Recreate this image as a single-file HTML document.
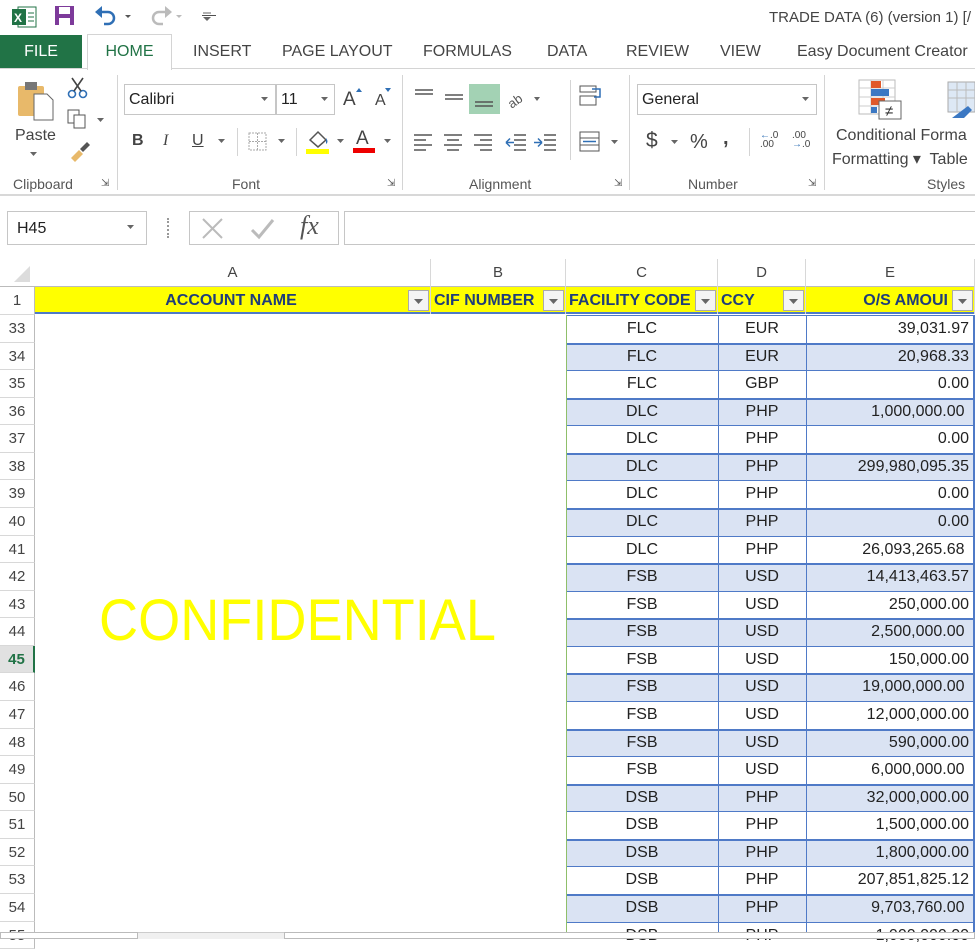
<!DOCTYPE html>
<html><head><meta charset="utf-8"><style>
*{margin:0;padding:0;box-sizing:border-box}
body{width:975px;height:939px;overflow:hidden;background:#fff;font-family:"Liberation Sans",sans-serif;position:relative;color:#444}
.a{position:absolute}
.t{font-size:15px;color:#444;white-space:nowrap}
.grp{font-size:14px;color:#555}
.sep{position:absolute;width:1px;background:#d4d4d4}
.rh{position:absolute;left:0;width:35px;font-size:15px;color:#444;text-align:center;border-bottom:1px solid #d8d8d8;border-right:1px solid #bbb;background:#fff}
.cell{position:absolute;font-size:16px;color:#222;white-space:nowrap}
</style></head><body>
<!-- title bar -->
<svg class="a" style="left:12px;top:6px" width="26" height="22"><rect x="6" y="1" width="18" height="20" fill="#fff" stroke="#217346"/><rect x="0" y="3" width="14" height="16" fill="#217346"/><text x="2" y="16" font-size="12" font-weight="bold" fill="#fff" font-family="Liberation Sans">X</text><line x1="16" y1="7" x2="22" y2="7" stroke="#217346"/><line x1="16" y1="11" x2="22" y2="11" stroke="#217346"/><line x1="16" y1="15" x2="22" y2="15" stroke="#217346"/></svg>
<svg class="a" style="left:54px;top:5px" width="22" height="22"><rect x="1" y="1" width="19" height="19" fill="#7d3a9a"/><rect x="5" y="2" width="11" height="7" fill="#fff"/><rect x="5" y="13" width="11" height="7" fill="#fff"/></svg>
<svg class="a" style="left:94px;top:4px" width="40" height="24"><path d="M5 8 H14 A6 6 0 0 1 14 20 H10" fill="none" stroke="#2f6fb5" stroke-width="2.5"/><path d="M1 8 L8 2 L8 14 Z" fill="#2f6fb5"/><path d="M31 11 l3 3 l3 -3z" fill="#555"/></svg>
<svg class="a" style="left:148px;top:4px" width="40" height="24"><path d="M20 8 H11 A6 6 0 0 0 11 20 H15" fill="none" stroke="#bbb" stroke-width="2.5"/><path d="M24 8 L17 2 L17 14 Z" fill="#bbb"/><path d="M28 11 l3 3 l3 -3z" fill="#bbb"/></svg>
<div class="a t" style="left:202px;top:6px;font-size:14px">&#8213;</div>
<svg class="a" style="left:202px;top:10px" width="10" height="14"><line x1="1" y1="3" x2="9" y2="3" stroke="#666"/><path d="M1 7 h8 l-4 4z" fill="#666"/></svg>
<div class="a t" style="left:769px;top:9px;font-size:15px;color:#444">TRADE DATA (6) (version 1) [/</div>
<!-- tabs -->
<div class="a" style="left:0;top:35px;width:82px;height:34px;background:#217346;color:#fff;font-size:16px;text-align:center;line-height:34px">FILE</div>
<div class="a" style="left:87px;top:34px;width:85px;height:36px;background:#fff;border:1px solid #d4d4d4;border-bottom:none;color:#217346;font-size:16px;text-align:center;line-height:34px;z-index:2">HOME</div>
<div class="a" style="left:0;top:68px;width:975px;height:1px;background:#d4d4d4"></div>
<div class="a t" style="left:193px;top:43px;font-size:16px">INSERT</div>
<div class="a t" style="left:282px;top:43px;font-size:16px">PAGE LAYOUT</div>
<div class="a t" style="left:423px;top:43px;font-size:16px">FORMULAS</div>
<div class="a t" style="left:547px;top:43px;font-size:16px">DATA</div>
<div class="a t" style="left:626px;top:43px;font-size:16px">REVIEW</div>
<div class="a t" style="left:720px;top:43px;font-size:16px">VIEW</div>
<div class="a t" style="left:797px;top:43px;font-size:16px">Easy Document Creator</div>
<!-- ribbon body -->
<div class="a" style="left:0;top:194px;width:975px;height:2px;background:#d8d8d8"></div>
<svg class="a" style="left:16px;top:80px" width="42" height="42"><rect x="2" y="6" width="26" height="30" rx="2" fill="#e8b96a"/><rect x="9" y="2" width="12" height="8" fill="#777"/><path d="M18 14 h13 l6 6 v20 h-19z" fill="#fff" stroke="#666"/></svg>
<div class="a t" style="left:15px;top:127px;font-size:16px">Paste</div>
<svg class="a" style="left:30px;top:152px" width="8" height="6"><path d="M0 0 h7 l-3.5 4z" fill="#666"/></svg>
<svg class="a" style="left:67px;top:77px" width="24" height="22"><circle cx="5" cy="17" r="3.5" fill="none" stroke="#2f6fb5" stroke-width="1.6"/><circle cx="16" cy="17" r="3.5" fill="none" stroke="#2f6fb5" stroke-width="1.6"/><path d="M7 14 L16 1 M14 14 L5 1" stroke="#444" stroke-width="1.6"/></svg>
<svg class="a" style="left:67px;top:108px" width="40" height="22"><rect x="1" y="2" width="11" height="13" fill="#fff" stroke="#555"/><rect x="7" y="7" width="11" height="13" fill="#fff" stroke="#555"/><path d="M30 10 h7 l-3.5 4z" fill="#666"/></svg>
<svg class="a" style="left:68px;top:140px" width="24" height="22"><path d="M3 18 l8 -8 l4 4 l-8 8z" fill="#e8b96a"/><path d="M12 9 l7 -7 l3 3 l-7 7z" fill="#555"/></svg>
<div class="a grp" style="left:13px;top:176px">Clipboard</div>
<div class="a grp" style="left:101px;top:178px;font-size:10px">&#8690;</div>
<div class="sep" style="left:117px;top:75px;height:115px"></div>
<div class="a" style="left:124px;top:84px;width:152px;height:31px;border:1px solid #c6c6c6;font-size:16px;color:#222;padding:6px 4px">Calibri</div>
<svg class="a" style="left:261px;top:97px" width="8" height="6"><path d="M0 0 h7 l-3.5 4z" fill="#666"/></svg>
<div class="a" style="left:276px;top:84px;width:59px;height:31px;border:1px solid #c6c6c6;font-size:16px;color:#222;padding:6px 4px">11</div>
<svg class="a" style="left:321px;top:97px" width="8" height="6"><path d="M0 0 h7 l-3.5 4z" fill="#666"/></svg>
<div class="a t" style="left:343px;top:89px;font-size:19px">A</div><svg class="a" style="left:356px;top:88px" width="7" height="5"><path d="M0 4 h6 l-3 -4z" fill="#2f6fb5"/></svg>
<div class="a t" style="left:375px;top:92px;font-size:16px">A</div><svg class="a" style="left:385px;top:88px" width="7" height="5"><path d="M0 0 h6 l-3 4z" fill="#2f6fb5"/></svg>
<div class="a t" style="left:132px;top:132px;font-size:16px;font-weight:bold">B</div>
<div class="a t" style="left:163px;top:132px;font-size:16px;font-style:italic;font-family:'Liberation Serif'">I</div>
<div class="a t" style="left:192px;top:132px;font-size:16px;text-decoration:underline">U</div>
<svg class="a" style="left:218px;top:139px" width="8" height="6"><path d="M0 0 h7 l-3.5 4z" fill="#666"/></svg>
<div class="sep" style="left:237px;top:128px;height:28px"></div>
<svg class="a" style="left:248px;top:132px" width="20" height="20"><rect x="1" y="1" width="17" height="17" fill="none" stroke="#aaa" stroke-dasharray="2 1"/><line x1="9.5" y1="1" x2="9.5" y2="18" stroke="#aaa" stroke-dasharray="2 1"/><line x1="1" y1="9.5" x2="18" y2="9.5" stroke="#aaa" stroke-dasharray="2 1"/></svg>
<svg class="a" style="left:278px;top:139px" width="8" height="6"><path d="M0 0 h7 l-3.5 4z" fill="#666"/></svg>
<div class="sep" style="left:296px;top:128px;height:28px"></div>
<svg class="a" style="left:306px;top:128px" width="24" height="26"><path d="M4 12 l8 -8 l8 8 l-8 7z" fill="#fff" stroke="#555" stroke-width="1.5"/><path d="M20 10 q3 4 0 6" fill="#2f6fb5"/><rect x="0" y="21" width="23" height="5" fill="#ffff00"/></svg>
<svg class="a" style="left:337px;top:139px" width="8" height="6"><path d="M0 0 h7 l-3.5 4z" fill="#666"/></svg>
<div class="a t" style="left:356px;top:128px;font-size:19px">A</div><div class="a" style="left:353px;top:148px;width:22px;height:5px;background:#e00"></div>
<svg class="a" style="left:384px;top:139px" width="8" height="6"><path d="M0 0 h7 l-3.5 4z" fill="#666"/></svg>
<div class="a grp" style="left:232px;top:176px">Font</div>
<div class="a grp" style="left:387px;top:178px;font-size:10px">&#8690;</div>
<div class="sep" style="left:402px;top:75px;height:115px"></div>
<!-- alignment -->
<svg class="a" style="left:412px;top:84px" width="200" height="30"><g stroke="#555" stroke-width="1.5"><path d="M3 6h18M3 10h18M3 14h0"/><path d="M33 11h18M33 15h18"/></g><rect x="57" y="0" width="31" height="30" fill="#a3d2b4"/><g stroke="#555" stroke-width="1.5"><path d="M63 18h18M63 22h18"/></g><text x="95" y="20" font-size="13" fill="#555" transform="rotate(-35 105 15)">ab</text><path d="M122 13 h6 l-3 4z" fill="#666"/></svg>
<svg class="a" style="left:412px;top:132px" width="150" height="20"><g stroke="#555" stroke-width="1.5"><path d="M2 3h18M2 8h12M2 13h18M2 18h12"/><path d="M32 3h18M35 8h12M32 13h18M35 18h12"/><path d="M62 3h18M68 8h12M62 13h18M68 18h12"/><path d="M102 3h12M102 8h12M102 13h12M102 18h12" stroke="#555"/><path d="M94 10.5h8M94 10.5l4-4M94 10.5l4 4" stroke="#2f6fb5"/><path d="M132 3h12M132 8h12M132 13h12M132 18h12"/><path d="M122 10.5h8M130 10.5l-4-4M130 10.5l-4 4" stroke="#2f6fb5"/></g></svg>
<div class="sep" style="left:570px;top:80px;height:80px"></div>
<svg class="a" style="left:578px;top:84px" width="26" height="24"><rect x="2" y="2" width="16" height="6" fill="none" stroke="#555"/><rect x="2" y="12" width="16" height="9" fill="none" stroke="#555"/><path d="M14 5 h8 v8 h-6" fill="none" stroke="#2f6fb5" stroke-width="1.5"/></svg>
<svg class="a" style="left:578px;top:130px" width="44" height="24"><rect x="2" y="2" width="19" height="19" fill="none" stroke="#555"/><path d="M2 8h19M2 15h19" stroke="#555"/><path d="M5 11.5h13" stroke="#2f6fb5" stroke-width="1.5"/><path d="M33 10 h7 l-3.5 4z" fill="#666"/></svg>
<div class="a grp" style="left:469px;top:176px">Alignment</div>
<div class="a grp" style="left:614px;top:178px;font-size:10px">&#8690;</div>
<div class="sep" style="left:629px;top:75px;height:115px"></div>
<!-- number -->
<div class="a" style="left:637px;top:84px;width:180px;height:31px;border:1px solid #c6c6c6;font-size:16px;color:#222;padding:6px 4px">General</div>
<svg class="a" style="left:802px;top:97px" width="8" height="6"><path d="M0 0 h7 l-3.5 4z" fill="#666"/></svg>
<div class="a t" style="left:646px;top:129px;font-size:21px">$</div>
<svg class="a" style="left:671px;top:140px" width="8" height="6"><path d="M0 0 h7 l-3.5 4z" fill="#666"/></svg>
<div class="a t" style="left:690px;top:131px;font-size:20px">%</div>
<div class="a t" style="left:723px;top:127px;font-size:20px;font-weight:bold">,</div>
<div class="sep" style="left:749px;top:128px;height:28px"></div>
<div class="a" style="left:760px;top:131px;font-size:10px;line-height:9px;color:#444"><span style="color:#2f6fb5">&#8592;</span>.0<br>.00</div>
<div class="a" style="left:792px;top:131px;font-size:10px;line-height:9px;color:#444">.00<br><span style="color:#2f6fb5">&#8594;</span>.0</div>
<div class="a grp" style="left:688px;top:176px">Number</div>
<div class="a grp" style="left:808px;top:178px;font-size:10px">&#8690;</div>
<div class="sep" style="left:824px;top:75px;height:115px"></div>
<svg class="a" style="left:858px;top:79px" width="46" height="42"><g fill="#fff" stroke="#bbb"><rect x="1" y="1" width="36" height="34"/></g><path d="M1 9h36M1 18h36M1 27h36M13 1v34M25 1v34" stroke="#ccc"/><rect x="13" y="2" width="10" height="7" fill="#e05a2b"/><rect x="13" y="10" width="18" height="7" fill="#3b78c3"/><rect x="13" y="19" width="14" height="7" fill="#e05a2b"/><rect x="13" y="28" width="6" height="6" fill="#3b78c3"/><rect x="21" y="22" width="22" height="18" fill="#fff" stroke="#666"/><text x="27" y="37" font-size="15" fill="#333">≠</text></svg>
<div class="a t" style="left:836px;top:127px;font-size:16px">Conditional Forma</div>
<div class="a t" style="left:832px;top:149px;font-size:16px">Formatting &#9662;&nbsp; Table</div>
<svg class="a" style="left:946px;top:80px" width="29" height="40"><rect x="2" y="2" width="27" height="30" fill="#dde8f5" stroke="#aaa"/><path d="M2 10h27M2 18h27M11 2v30M20 2v30" stroke="#bbb"/><path d="M6 38 l16 -12 l4 4 l-8 8z" fill="#3b78c3"/></svg>
<div class="a grp" style="left:927px;top:176px">Styles</div>
<!-- formula bar -->
<div class="a" style="left:7px;top:211px;width:140px;height:34px;border:1px solid #c6c6c6;font-size:16px;color:#222;padding:8px 9px">H45</div>
<svg class="a" style="left:127px;top:225px" width="8" height="6"><path d="M0 0 h7 l-3.5 4z" fill="#666"/></svg>
<div class="a" style="left:167px;top:218px;width:2px;height:20px;border-left:2px dotted #999"></div>
<div class="a" style="left:189px;top:211px;width:150px;height:34px;border:1px solid #c6c6c6"></div>
<svg class="a" style="left:200px;top:216px" width="90" height="26"><path d="M3 3 L22 22 M22 3 L3 22" stroke="#bbb" stroke-width="2"/><path d="M52 14 l7 7 l14 -17" fill="none" stroke="#bbb" stroke-width="3"/></svg>
<div class="a" style="left:300px;top:211px;font-family:'Liberation Serif';font-style:italic;font-size:26px;color:#555">fx</div>
<div class="a" style="left:344px;top:211px;width:640px;height:34px;border:1px solid #c6c6c6"></div>
<!-- column headers -->
<div class="a" style="left:0;top:259px;width:975px;height:28px;background:#fff;border-bottom:1px solid #bbb"></div>
<svg class="a" style="left:12px;top:264px" width="20" height="20"><path d="M18 2 L18 18 L2 18Z" fill="#dcdcdc"/></svg>
<div id="colh"></div>
<div id="grid"></div>
<script>
var cols=[[35,431,'A'],[431,566,'B'],[566,718,'C'],[718,806,'D'],[806,975,'E']];
var h='';
cols.forEach(function(c){h+='<div class="a" style="left:'+c[0]+'px;top:259px;width:'+(c[1]-c[0])+'px;height:28px;border-right:1px solid #d8d8d8;text-align:center;font-size:15px;color:#444;line-height:28px">'+c[2]+'</div>';});
// header row 1
var top1=287,rh=27.57;
h+='<div class="rh" style="top:'+top1+'px;height:28px;line-height:28px">1</div>';
h+='<div class="a" style="left:35px;top:'+top1+'px;width:940px;height:27px;background:#ffff00;border-bottom:2px solid #4f7ac7"></div>';
var hd=[[35,431,'ACCOUNT NAME','center'],[431,566,'CIF NUMBER','left'],[566,718,'FACILITY CODE','left'],[718,806,'CCY','left'],[806,975,'O/S AMOUI','right']];
hd.forEach(function(c,i){
 var w=c[1]-c[0];
 h+='<div class="a" style="left:'+c[0]+'px;top:'+top1+'px;width:'+w+'px;height:27px;border-right:1px solid #d8d8d8;overflow:hidden;font-size:16px;font-weight:bold;color:#1f3d7a;line-height:28px;text-align:'+c[3]+';padding:0 '+(c[3]=='right'?'26px':'3px')+' 0 '+(c[3]=='center'?'0':'3px')+';white-space:nowrap">'+c[2]+'</div>';
 h+='<div class="a" style="left:'+(c[1]-23)+'px;top:'+(top1+3)+'px;width:21px;height:21px;background:#f4f4f4;border:1px solid #aaa"><svg width="19" height="19"><path d="M5 8 h9 l-4.5 5z" fill="#666"/></svg></div>';
});
document.getElementById('colh').innerHTML=h;
var d=[['FLC','EUR','39,031.97'],['FLC','EUR','20,968.33'],['FLC','GBP','0.00'],['DLC','PHP','1,000,000.00 '],['DLC','PHP','0.00'],['DLC','PHP','299,980,095.35'],['DLC','PHP','0.00'],['DLC','PHP','0.00'],['DLC','PHP','26,093,265.68 '],['FSB','USD','14,413,463.57'],['FSB','USD','250,000.00'],['FSB','USD','2,500,000.00 '],['FSB','USD','150,000.00'],['FSB','USD','19,000,000.00 '],['FSB','USD','12,000,000.00'],['FSB','USD','590,000.00'],['FSB','USD','6,000,000.00 '],['DSB','PHP','32,000,000.00'],['DSB','PHP','1,500,000.00'],['DSB','PHP','1,800,000.00'],['DSB','PHP','207,851,825.12'],['DSB','PHP','9,703,760.00 '],['DSB','PHP','1,000,000.00']];
var g='';
for(var i=0;i<d.length;i++){
 var t=315+i*rh, n=33+i, blue=(i%2==1);
 var sel=(n==45);
 g+='<div class="rh" style="top:'+t+'px;height:'+rh+'px;line-height:'+rh+'px;'+(sel?'background:#e1e1e1;color:#217346;font-weight:bold;border-right:2px solid #217346':'')+'">'+n+'</div>';
 g+='<div class="a" style="left:566px;top:'+t+'px;width:409px;height:'+rh+'px;background:'+(blue?'#dae3f3':'#fff')+';border-top:'+(blue?'2px':'1px')+' solid #4f7ac7"></div>';
 g+='<div class="cell" style="left:566px;top:'+t+'px;width:152px;text-align:center;line-height:'+rh+'px">'+d[i][0]+'</div>';
 g+='<div class="cell" style="left:718px;top:'+t+'px;width:88px;text-align:center;line-height:'+rh+'px">'+d[i][1]+'</div>';
 g+='<div class="cell" style="left:806px;top:'+t+'px;width:163px;text-align:right;line-height:'+rh+'px;white-space:pre">'+d[i][2]+'</div>';
}
g+='<div class="a" style="left:566px;top:315px;width:1px;height:620px;background:#8fbf6a"></div>';
g+='<div class="a" style="left:718px;top:315px;width:1px;height:620px;background:#4f7ac7"></div>';
g+='<div class="a" style="left:806px;top:315px;width:1px;height:620px;background:#4f7ac7"></div>';
g+='<div class="a" style="left:973px;top:315px;width:2px;height:620px;background:#4f7ac7"></div>';
g+='<svg class="a" style="left:97px;top:588px" width="410" height="60"><text x="2" y="52" font-size="58" fill="#ffff00" font-family="Liberation Sans" textLength="397" lengthAdjust="spacingAndGlyphs">CONFIDENTIAL</text></svg>';
g+='<div class="a" style="left:0;top:932px;width:975px;height:7px;background:#f0f0f0;border-top:1px solid #ccc"></div>';
g+='<div class="a" style="left:0;top:932px;width:138px;height:7px;background:#fff;border:1px solid #bbb"></div>';
g+='<div class="a" style="left:284px;top:932px;width:691px;height:7px;background:#fff;border:1px solid #bbb"></div>';
document.getElementById('grid').innerHTML=g;
</script>
</body></html>
